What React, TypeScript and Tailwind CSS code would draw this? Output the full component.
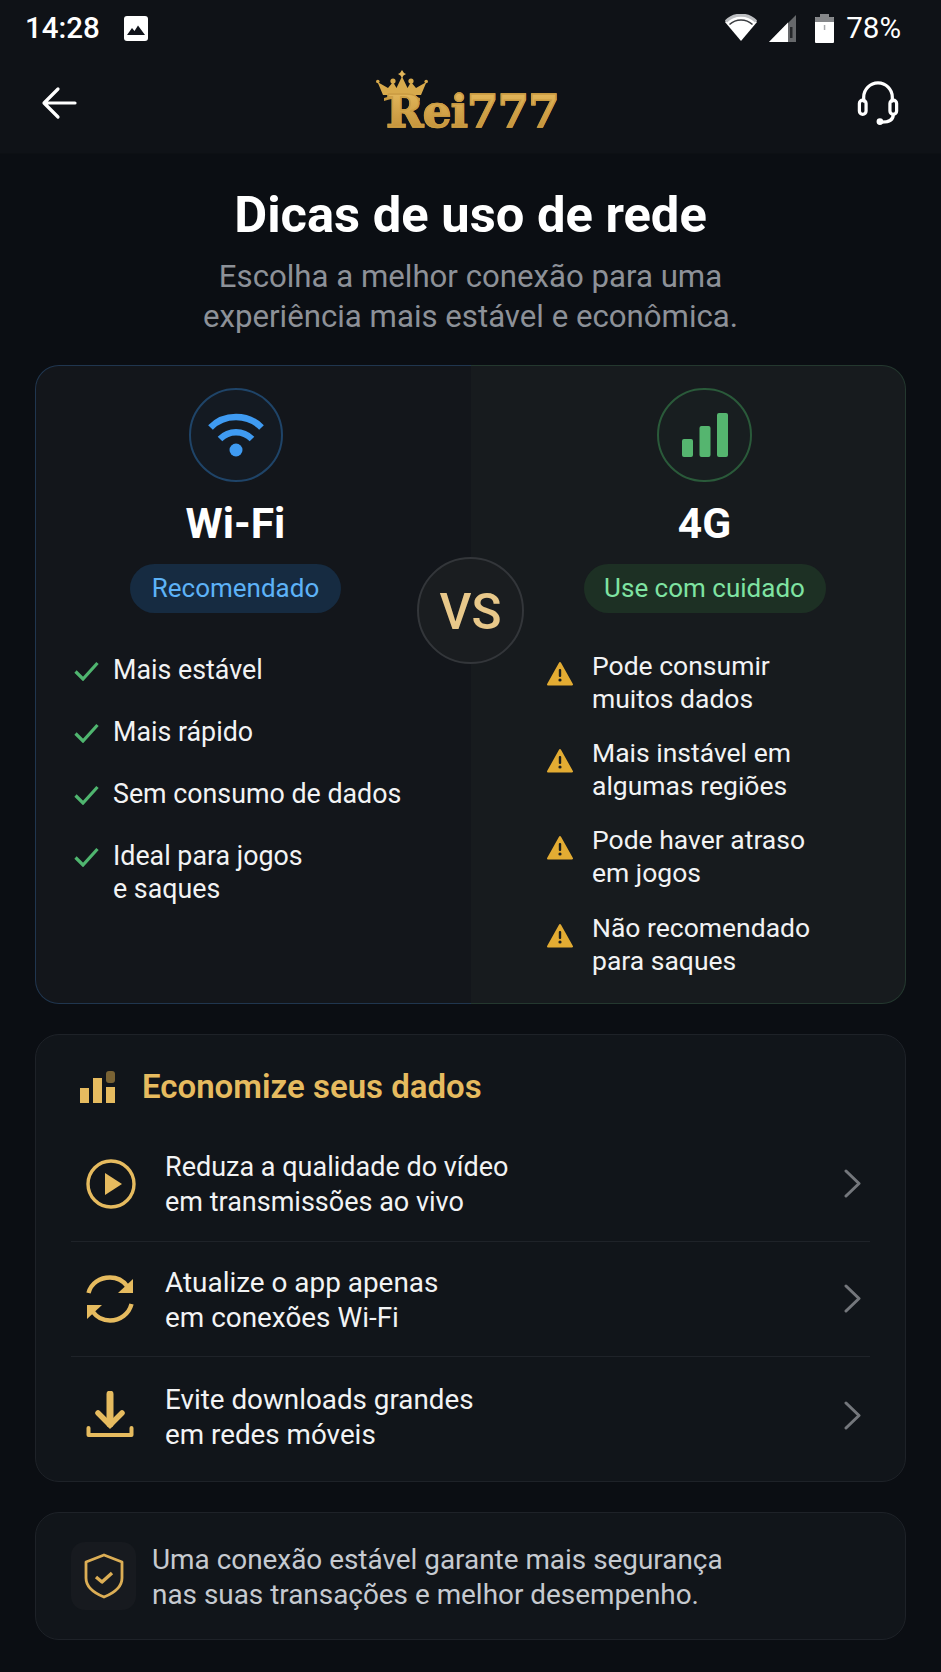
const WIFI_PROS = [["Mais estável"], ["Mais rápido"], ["Sem consumo de dados"], ["Ideal para jogos", "e saques"]];
const CELL_CONS = [
  ["Pode consumir", "muitos dados"],
  ["Mais instável em", "algumas regiões"],
  ["Pode haver atraso", "em jogos"],
  ["Não recomendado", "para saques"],
];

function StatusBar() {
  return (
    <div className="h-[53px] pt-[3px] flex items-center justify-between pl-[25px] pr-[40px] text-[29.5px] text-white">
      <div className="flex items-center gap-[24px]">
        <span className="font-medium">14:28</span>
        <svg width="24" height="25" viewBox="0 0 24 25">
          <rect x="0" y="0" width="24" height="25" rx="3" fill="#fff" />
          <path d="M3 19 8 12l2.500 3L14 9.500 21 19Z" fill="#10131a" />
        </svg>
      </div>
      <div className="flex items-center">
        <svg width="32" height="28" viewBox="0 0 32 28" className="mr-[12px]">
          <path d="M0 8C8-1.500 24-1.500 32 8L16 27Z" fill="#fff" />
          <path d="M4.500 10.500C11 4.500 21 4.500 27.500 10.500" fill="none" stroke="#3a3c40" strokeWidth="1.6" />
          <path d="M1 7.500C9-1 23-1 31 7.500" fill="none" stroke="#bdbfc2" strokeWidth="3" />
        </svg>
        <svg width="27" height="27" viewBox="0 0 27 27" className="mr-[19px]">
          <path d="M27 0V27H0Z" fill="#66686b" />
          <path d="M19 7.500V27H0Z" fill="#fff" />
          <rect x="21" y="12" width="2.500" height="11" fill="#26282b" />
        </svg>
        <svg width="19" height="29" viewBox="0 0 19 29" className="mr-[12px]">
          <path d="M5.500 0h8v3h4.500a1 1 0 0 1 1 1v24a1 1 0 0 1-1 1H1a1 1 0 0 1-1-1V4a1 1 0 0 1 1-1h4.500Z" fill="#fff" />
          <path d="M5.500 0h8v3h4.500a1 1 0 0 1 1 1v4H0V4a1 1 0 0 1 1-1h4.500Z" fill="#85878a" />
          <rect x="8.800" y="11" width="1.500" height="5" fill="#a8aaad" />
        </svg>
        <span>78%</span>
      </div>
    </div>
  );
}

function Logo() {
  return (
    <div className="relative w-[185px] h-[66px] ml-[2px]">
      <svg width="52" height="31" viewBox="0 0 52 31" className="absolute left-0 top-0">
        <path d="M7 25 1.500 12 12 18l5-6 3.500 6L26 6.500 31.500 18l3.500-6 5 6 10.500-6L45 25Z" fill="#d8aa4c" />
        <path d="M8 28c11-4 25-4 36 0v3c-11-4-25-4-36 0Z" fill="#c6983f" />
        <path d="M26 0l2 3 2 1-2.500 1.500L26 8l-1.500-2.500L22 4l2-1Z" fill="#e3b65a" />
        <circle cx="17" cy="11" r="2.600" fill="#d8aa4c" />
        <circle cx="35" cy="11" r="2.600" fill="#d8aa4c" />
        <circle cx="1.800" cy="11.500" r="1.800" fill="#d8aa4c" />
        <circle cx="50.200" cy="11.500" r="1.800" fill="#d8aa4c" />
      </svg>
      <span className="absolute left-[10px] top-[12px] font-['DejaVu_Serif',serif] text-[45px] leading-[60px] font-bold tracking-[-0.7px] bg-gradient-to-b from-[#ecc163] to-[#b8862f] bg-clip-text text-transparent [-webkit-text-stroke:1.4px_#cb9c42]">
        Rei777
      </span>
    </div>
  );
}

function Header() {
  return (
    <div className="h-[101px] flex items-center justify-between pl-[40px] pr-[42px] border-b border-[#0d1014]">
      <svg width="38" height="38" viewBox="0 0 38 38" fill="none" stroke="#fff" strokeWidth="3.2" strokeLinecap="round" strokeLinejoin="round">
        <path d="M35 19H5M18 5 4 19l14 14" />
      </svg>
      <Logo />
      <svg width="42" height="44" viewBox="0 0 44 46" fill="none" stroke="#fff" strokeWidth="3.4" strokeLinecap="round">
        <path d="M7 21V17a15 15 0 0 1 30 0v4" />
        <rect x="2.500" y="20" width="7" height="15" rx="3.500" />
        <rect x="34.500" y="20" width="7" height="15" rx="3.500" />
        <path d="M38 35c0 6-5 8-12 8" />
        <circle cx="24" cy="42.500" r="1.800" fill="#fff" />
      </svg>
    </div>
  );
}

function Check() {
  return (
    <svg width="25" height="20" viewBox="0 0 25 20" fill="none" stroke="#4fb56f" strokeWidth="3.2" className="mt-[7px] shrink-0">
      <path d="M1.500 10.500 9 18 23.500 2" />
    </svg>
  );
}

function Warning() {
  return (
    <svg width="26" height="25" viewBox="0 0 26 25" className="mt-[12px] shrink-0">
      <path d="M13 2 25 23.500H1Z" fill="#e3ac33" stroke="#e3ac33" strokeWidth="2" strokeLinejoin="round" />
      <rect x="11.800" y="8" width="2.400" height="8" rx="1" fill="#1b1e20" />
      <circle cx="13" cy="19" r="1.600" fill="#1b1e20" />
    </svg>
  );
}

function CompareCard() {
  return (
    <div className="relative grid grid-cols-[436px_1fr] h-[639px]">
      <div className="bg-[#13161b] pt-[22px] flex flex-col rounded-l-[24px] border-y border-l border-[#20364f]">
        <div className="flex flex-col items-center pr-[36px]">
          <div className="w-[94px] h-[94px] rounded-full border-2 border-[#1f4468] bg-[#141a22] flex items-center justify-center">
            <svg width="56" height="44" viewBox="0 0 56 44">
              <path d="M2.500 14.500C16 .5 40 .5 53.500 14.500" fill="none" stroke="#3f9bf2" strokeWidth="6.500" />
              <path d="M12 26c9-9 23-9 32 0" fill="none" stroke="#3f9bf2" strokeWidth="6.500" />
              <circle cx="28" cy="37" r="6.500" fill="#3f9bf2" />
            </svg>
          </div>
          <div className="mt-[14px] text-[42.5px] leading-[56px] font-bold text-white">Wi-Fi</div>
          <div className="mt-[12px] w-[211px] h-[49px] rounded-full bg-[#162b41] flex items-center justify-center text-[26px] text-[#5db2f7]">
            Recomendado
          </div>
        </div>
        <div className="mt-[41px] pl-[38px] flex flex-col gap-[29px]">
          {WIFI_PROS.map((lines) => (
            <div key={lines[0]} className="flex gap-[14px]">
              <Check />
              <div className="text-[26.8px] leading-[33px] text-[#f2f3f4]">
                {lines.map((l) => (
                  <div key={l}>{l}</div>
                ))}
              </div>
            </div>
          ))}
        </div>
      </div>
      <div className="bg-[#171b1e] pt-[22px] flex flex-col rounded-r-[24px] border-y border-r border-[#24382f]">
        <div className="flex flex-col items-center pl-[33px]">
          <div className="w-[95px] h-[94px] rounded-full border-2 border-[#2a5a3a] bg-[#181e20] flex items-center justify-center">
            <svg width="46" height="44" viewBox="0 0 46 44" fill="#55b56f">
              <rect x="0" y="26" width="11" height="18" rx="2" />
              <rect x="17.500" y="13" width="11" height="31" rx="2" />
              <rect x="35" y="0" width="11" height="44" rx="2" />
            </svg>
          </div>
          <div className="mt-[14px] text-[42.5px] leading-[56px] font-bold text-white">4G</div>
          <div className="mt-[12px] w-[242px] h-[49px] rounded-full bg-[#1d3024] flex items-center justify-center text-[26px] text-[#7fe3a2]">
            Use com cuidado
          </div>
        </div>
        <div className="mt-[36.5px] pl-[76px] flex flex-col gap-[21.2px]">
          {CELL_CONS.map((lines) => (
            <div key={lines[0]} className="flex gap-[19px]">
              <Warning />
              <div className="text-[26.5px] leading-[33px] text-[#f2f3f4]">
                {lines.map((l) => (
                  <div key={l}>{l}</div>
                ))}
              </div>
            </div>
          ))}
        </div>
      </div>
      <div className="absolute left-[382px] top-[192px] w-[107px] h-[107px] pt-[5px] rounded-full border-2 border-[#33363a] bg-[#1a1d20] flex items-center justify-center text-[49.5px] font-medium text-[#e8c88a]">
        VS
      </div>
    </div>
  );
}

function PlayIcon() {
  return (
    <svg width="50" height="50" viewBox="0 0 50 50">
      <circle cx="25" cy="25" r="23" fill="none" stroke="#e6bb5f" strokeWidth="3.400" />
      <path d="M19 14 36 25 19 36Z" fill="#e6bb5f" />
    </svg>
  );
}

function SyncIcon() {
  return (
    <svg width="48" height="48" viewBox="0 0 48 48" fill="none" stroke="#e6bb5f" strokeWidth="4.400">
      <path d="M2.500 18C5 8 14 2.500 24 2.500c7 0 13 3 17 8.500" />
      <path d="M45.500 29C43 39 34 45.500 24 45.500c-7 0-13-3-17-8.500" />
      <path d="M47 4v14H32Z" fill="#e6bb5f" stroke="none" />
      <path d="M1 44V30h15Z" fill="#e6bb5f" stroke="none" />
    </svg>
  );
}

function DownloadIcon() {
  return (
    <svg width="48" height="48" viewBox="0 0 48 48" fill="none" stroke="#e6bb5f" strokeWidth="5" strokeLinecap="round">
      <path d="M24 3v30" strokeWidth="7" />
      <path d="M12 22l12 12 12-12" strokeWidth="5.500" />
      <path d="M2.500 37v7h43v-7" strokeWidth="4" strokeLinejoin="round" />
    </svg>
  );
}

const TIPS = [
  { icon: <PlayIcon />, lines: ["Reduza a qualidade do vídeo", "em transmissões ao vivo"], size: "text-[27px]", h: "h-[115px]" },
  { icon: <SyncIcon />, lines: ["Atualize o app apenas", "em conexões Wi-Fi"], size: "text-[27.9px]", h: "h-[115px]" },
  { icon: <DownloadIcon />, lines: ["Evite downloads grandes", "em redes móveis"], size: "text-[27.8px]", h: "h-[117px]" },
];

function SavingsCard() {
  return (
    <div className="h-[448px] rounded-[24px] border border-[#1e2228] bg-[#11151a] pt-[32px] px-[35px]">
      <div className="flex items-center h-[40px]">
        <svg width="36" height="34" viewBox="0 0 36 34" className="ml-[9px]">
          <rect x="0" y="18" width="9" height="15" fill="#e6bb5f" />
          <rect x="13" y="8" width="9" height="25" fill="#e6bb5f" />
          <rect x="26" y="17" width="9" height="16" fill="#e6bb5f" />
          <rect x="26" y="1" width="9" height="12" rx="3" fill="#7a6334" />
        </svg>
        <span className="ml-[26px] text-[33px] font-semibold text-[#e6bb5f]">Economize seus dados</span>
      </div>
      <div className="mt-[20px]">
        {TIPS.map((t, i) => (
          <div
            key={t.lines[0]}
            className={`flex items-center ${t.h} ${i < TIPS.length - 1 ? "border-b border-[#1f2329]" : ""}`}
          >
            <div className="w-[94px] pl-[15px] shrink-0">{t.icon}</div>
            <div className={`flex-1 pt-[3px] leading-[35px] text-[#f2f3f4] ${t.size}`}>
              {t.lines.map((l) => (
                <div key={l}>{l}</div>
              ))}
            </div>
            <svg width="18" height="29" viewBox="0 0 18 29" fill="none" stroke="#74777c" strokeWidth="3" strokeLinecap="round" strokeLinejoin="round" className="mr-[8px]">
              <path d="M2 2l13 12.500L2 27" />
            </svg>
          </div>
        ))}
      </div>
    </div>
  );
}

function FooterCard() {
  return (
    <div className="h-[128px] rounded-[24px] border border-[#1e2228] bg-[#11151a] flex items-center pl-[35px]">
      <div className="w-[65px] h-[68px] rounded-[14px] bg-[#171a1f] flex items-center justify-center">
        <svg width="40" height="46" viewBox="0 0 40 46" fill="none" stroke="#dcae55" strokeWidth="2.800" strokeLinejoin="round">
          <path d="M20 2 38 9v16c0 9-8 15-18 19C10 40 2 34 2 25V9Z" />
          <path d="M12 24l6 5 10-9" strokeWidth="3.400" />
        </svg>
      </div>
      <div className="ml-[16px] mt-[3px] text-[27.9px] leading-[35px] text-[#c6cad0]">
        <div>Uma conexão estável garante mais segurança</div>
        <div>nas suas transações e melhor desempenho.</div>
      </div>
    </div>
  );
}

export default function App() {
  return (
    <div className="min-h-[1672px] bg-[#0b0e13] font-['Roboto',sans-serif]">
      <div className="bg-[#0f1217]">
        <StatusBar />
        <Header />
      </div>
      <div className="text-center pt-[30px]">
        <h1 className="text-[50.7px] leading-[62px] font-bold text-white">Dicas de uso de rede</h1>
        <p className="mt-[11px] text-[31.2px] leading-[39.5px] text-[#8d9198]">
          Escolha a melhor conexão para uma
          <br />
          experiência mais estável e econômica.
        </p>
      </div>
      <div className="px-[35px] mt-[28.5px] flex flex-col gap-[30px]">
        <CompareCard />
        <SavingsCard />
        <FooterCard />
      </div>
    </div>
  );
}
